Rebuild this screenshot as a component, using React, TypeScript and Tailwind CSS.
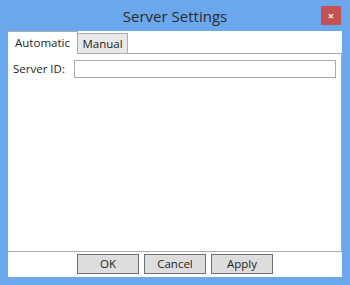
export default function App() {
  const font = { fontFamily: '"Open Sans", "Noto Sans", sans-serif' }
  return (
    <div
      className="flex h-[285px] w-[350px] flex-col bg-[#6ba7ec] text-[#1e1e1e]"
      style={font}
    >
      {/* title bar */}
      <div className="relative flex h-[31px] shrink-0 items-center justify-center pt-px">
        <span className="text-[15px] leading-none text-[#2b2b2b]">Server Settings</span>
        <button className="absolute left-[321px] top-[6px] flex h-[19px] w-[20px] items-center justify-center bg-[#c75050] text-[11px] font-bold leading-none text-white">
          ×
        </button>
      </div>

      {/* client area */}
      <div className="mx-2 mb-2 flex flex-1 flex-col bg-white">
        <div className="flex h-[22px] shrink-0 items-end">
          <div className="relative z-10 -mb-px flex h-[23px] w-[70px] items-center justify-center border border-b-0 border-l-0 border-[#acacac] bg-white text-[11.5px]">
            Automatic
          </div>
          <div className="flex h-[20px] w-[50px] items-center justify-center border border-l-0 border-b-0 border-[#acacac] bg-[#e8e8e8] text-[11.5px]">
            Manual
          </div>
        </div>

        <div className="flex flex-1 flex-col border-t border-r border-b border-[#acacac] px-[5px] pt-[6px]">
          <div className="flex items-center">
            <label className="w-[61px] text-[11.5px]">Server ID:</label>
            <input className="h-[18px] flex-1 border border-[#acacac] outline-none" />
          </div>
        </div>

        <div className="flex h-[25px] shrink-0 items-center justify-center gap-[5px] pb-px">
          <button className="h-[20px] w-[62px] border border-[#707070] bg-[#dddddd] text-[11.5px]">OK</button>
          <button className="h-[20px] w-[62px] border border-[#707070] bg-[#dddddd] text-[11.5px]">Cancel</button>
          <button className="h-[20px] w-[62px] border border-[#707070] bg-[#dddddd] text-[11.5px]">Apply</button>
        </div>
      </div>
    </div>
  )
}
